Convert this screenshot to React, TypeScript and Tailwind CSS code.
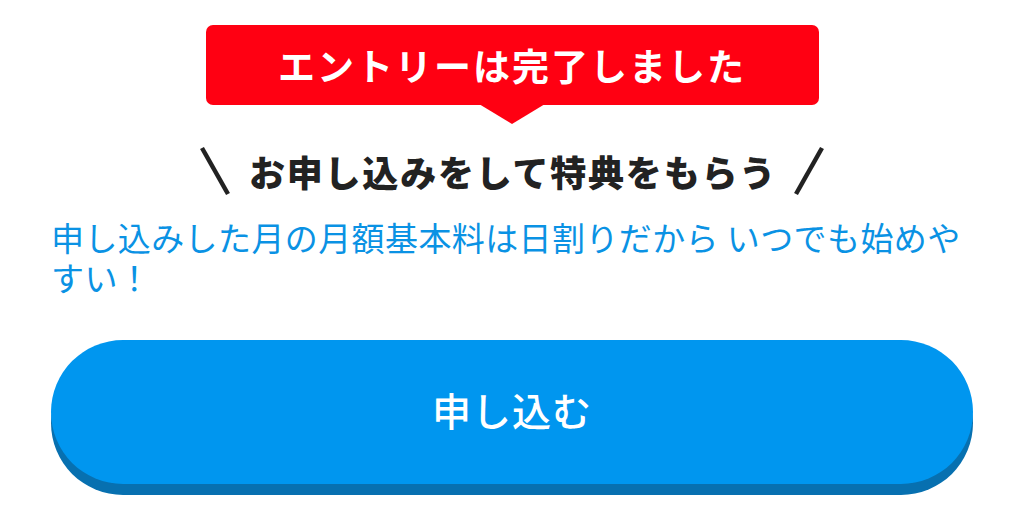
const jp = { fontFamily: '"Noto Sans CJK JP", "Noto Sans", sans-serif' };

export default function App() {
  return (
    <div className="w-[1024px] h-[515px] bg-white overflow-hidden" style={jp}>
      <div className="px-[51px] pt-[25px] flex flex-col items-center">
        <div className="relative">
          <div className="w-[613px] h-[80px] bg-[#ff0012] rounded-[7px] flex items-center justify-center">
            <span className="text-white text-[37px] font-bold tracking-[2px] leading-none">
              エントリーは完了しました
            </span>
          </div>
          <div className="absolute left-1/2 -translate-x-1/2 top-[79px] w-0 h-0 border-l-[33px] border-r-[33px] border-t-[20px] border-l-transparent border-r-transparent border-t-[#ff0012]" />
        </div>

        <div className="mt-[41px] h-[50px] flex items-center text-[#222222]">
          <svg width="32" height="50" viewBox="0 0 32 50" className="mr-[18px]">
            <line x1="3" y1="2" x2="29" y2="48" stroke="#222222" strokeWidth="4.5" />
          </svg>
          <span className="text-[36px] font-black tracking-[1.8px] leading-none">
            お申し込みをして特典をもらう
          </span>
          <svg width="32" height="50" viewBox="0 0 32 50" className="ml-[16px]">
            <line x1="29" y1="2" x2="3" y2="48" stroke="#222222" strokeWidth="4.5" />
          </svg>
        </div>

        <p className="mt-[21px] w-full text-[33px] leading-[40px] tracking-[0.4px] text-[#0a92e4]">
          申し込みした月の月額基本料は日割りだから いつでも始めやすい！
        </p>

        <button className="mt-[43px] w-full h-[144px] bg-[#0096ef] rounded-full shadow-[0_11px_0_#0770b0] flex items-center justify-center pb-[5px]">
          <span className="text-white text-[39px] font-medium tracking-[1px] leading-none">申し込む</span>
        </button>
      </div>
    </div>
  );
}
